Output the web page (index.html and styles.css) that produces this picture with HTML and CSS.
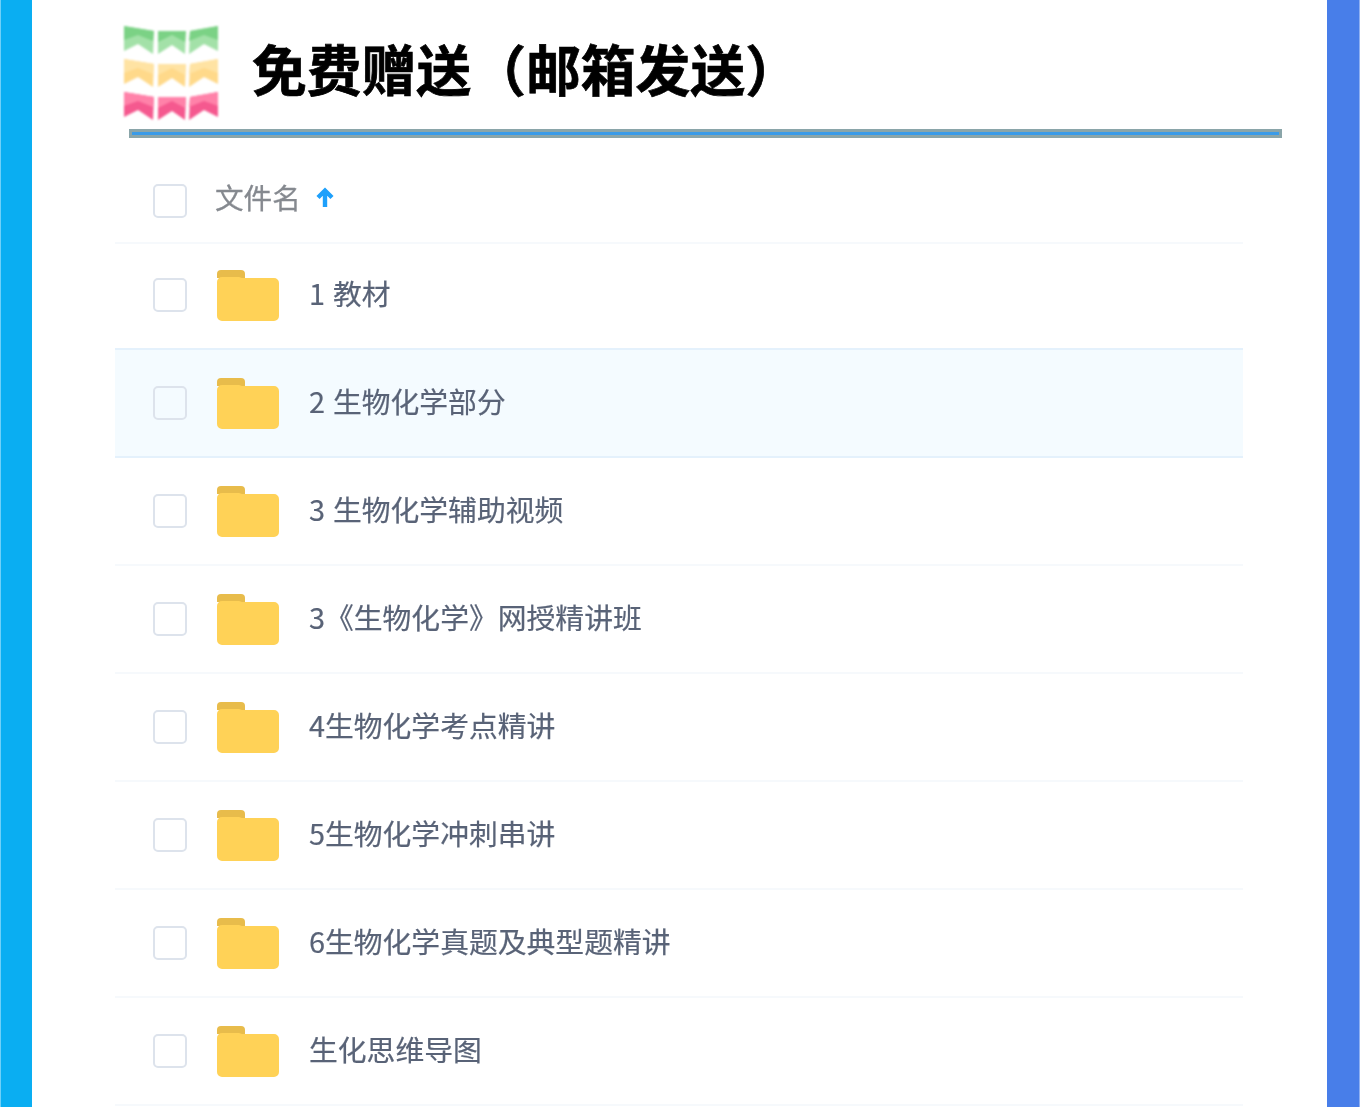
FILE: index.html
```html
<!DOCTYPE html>
<html lang="zh-CN">
<head>
<meta charset="utf-8">
<title>免费赠送（邮箱发送）</title>
<link rel="stylesheet" href="styles.css">
</head>
<body>
<div class="page">
  <div class="bar bar-left"></div>
  <main class="main">
    <header class="head">
      <svg class="bunting" viewBox="0 0 94 94" aria-hidden="true">
        <defs>
          <g id="flags-a">
            <polygon points="0,0 30,5 29,28 14,18 0,25"/>
            <polygon points="34,5 62,5 61,28 48,19 34,28"/>
            <polygon points="66,5 94,0 94,25 80,18 65,28"/>
          </g>
          <g id="flags-b">
            <polygon points="0,0 30,5 29,15 14,9 0,14"/>
            <polygon points="34,5 62,5 61,16 48,9 34,16"/>
            <polygon points="66,5 94,0 94,14 80,9 65,15"/>
          </g>
        </defs>
        <g class="row-green"><use href="#flags-a" class="lo"/><use href="#flags-b" class="hi"/></g>
        <g class="row-yellow" transform="translate(0 33)"><use href="#flags-a" class="lo"/><use href="#flags-b" class="hi"/></g>
        <g class="row-pink" transform="translate(0 66)"><use href="#flags-a" class="lo"/><use href="#flags-b" class="hi"/></g>
      </svg>
      <h1 class="title">免费赠送（邮箱发送）</h1>
    </header>
    <div class="rule"></div>
    <section class="list">
      <div class="list-head">
        <span class="check"></span>
        <span class="col-name">文件名</span>
        <svg class="sort" viewBox="0 0 18 21" aria-hidden="true"><path d="M9 20V4M2 10.5l7-7 7 7" fill="none" stroke="currentColor" stroke-width="4.4"/></svg>
      </div>
      <div class="row"><span class="check"></span><svg class="folder" viewBox="0 0 62 51"><use href="#folder"/></svg><span class="name">1 教材</span></div>
      <div class="row is-hover"><span class="check"></span><svg class="folder" viewBox="0 0 62 51"><use href="#folder"/></svg><span class="name">2 生物化学部分</span></div>
      <div class="row"><span class="check"></span><svg class="folder" viewBox="0 0 62 51"><use href="#folder"/></svg><span class="name">3 生物化学辅助视频</span></div>
      <div class="row"><span class="check"></span><svg class="folder" viewBox="0 0 62 51"><use href="#folder"/></svg><span class="name">3《生物化学》网授精讲班</span></div>
      <div class="row"><span class="check"></span><svg class="folder" viewBox="0 0 62 51"><use href="#folder"/></svg><span class="name">4生物化学考点精讲</span></div>
      <div class="row"><span class="check"></span><svg class="folder" viewBox="0 0 62 51"><use href="#folder"/></svg><span class="name">5生物化学冲刺串讲</span></div>
      <div class="row"><span class="check"></span><svg class="folder" viewBox="0 0 62 51"><use href="#folder"/></svg><span class="name">6生物化学真题及典型题精讲</span></div>
      <div class="row"><span class="check"></span><svg class="folder" viewBox="0 0 62 51"><use href="#folder"/></svg><span class="name">生化思维导图</span></div>
    </section>
  </main>
  <div class="bar bar-right"></div>
</div>
<svg class="defs" aria-hidden="true">
  <defs>
    <g id="folder">
      <path d="M0 4a4 4 0 0 1 4-4h20a4 4 0 0 1 4 4v4H0z" fill="#e8bc4b"/>
      <path d="M0 12a5 5 0 0 1 5-5h17l3 1h32a5 5 0 0 1 5 5v33a5 5 0 0 1-5 5H5a5 5 0 0 1-5-5z" fill="#ffd257"/>
    </g>
  </defs>
</svg>
</body>
</html>
```
FILE: styles.css
```css
* { box-sizing: border-box; }
html, body { margin: 0; height: 100%; overflow: hidden; background: #fff; }
body { font-family: "Noto Sans CJK SC", "Noto Sans", sans-serif; }

.page { display: flex; height: 1107px; width: 1360px; }

.bar { flex: none; width: 33px; height: 100%; }
.bar-left { width: 32px; background: #0aaef2; border-left: 1px solid #6fd0f8; }
.bar-right { background: #487ee9; border-right: 1px solid #8fb0f2; }

.main { flex: 1; min-width: 0; }

.head { display: flex; align-items: center; height: 129px; padding: 26px 0 9px 92px; }
.bunting { width: 94px; height: 94px; flex: none; filter: blur(0.8px); }
.title { margin: 0 0 0 34px; font-size: 54.8px; font-weight: 700; color: #000; line-height: 1; position: relative; top: -6px; white-space: nowrap; -webkit-text-stroke: 0.7px #000; filter: blur(0.4px); }

.row-green .hi { fill: #7bd285; } .row-green .lo { fill: #a3e1a8; }
.row-yellow .hi { fill: #ffe3a3; } .row-yellow .lo { fill: #ffd98a; }
.row-pink .hi { fill: #ff82a9; } .row-pink .lo { fill: #f5598f; }

.rule { width: 1153px; height: 9px; margin-left: 97px; background: #3a9be8; border: 3px solid #8aa5a9; }

.list { width: 1128px; margin-left: 83px; }
.list-head { display: flex; align-items: center; height: 104px; padding: 22px 0 0 38px; position: relative; z-index: 1; box-shadow: 0 2px 0 #f6f9fc; }
.col-name { margin-left: 28px; font-size: 28.6px; color: #85898f; line-height: 1; position: relative; top: -4px; -webkit-text-stroke: 0.3px #85898f; filter: blur(0.5px); }
.sort { width: 18px; height: 21px; margin-left: 15px; color: #1ea0fb; position: relative; top: -4px; filter: blur(0.3px); }

.row { display: flex; align-items: center; height: 108px; padding-left: 38px; border-bottom: 2px solid #f6f9fc; }
.row.is-hover { background: #f4fbff; border-bottom-color: #e4f1fc; box-shadow: 0 -2px 0 #e4f1fc; }

.check { flex: none; width: 34px; height: 34px; border: 2px solid #dde3ec; border-radius: 5px; background: #fff; filter: blur(0.5px); }
.is-hover .check { background: transparent; }
.folder { flex: none; width: 62px; height: 51px; margin-left: 30px; filter: blur(0.5px); }
.name { margin-left: 30px; font-size: 28.8px; word-spacing: 1.5px; color: #596377; line-height: 1; position: relative; top: -2px; white-space: nowrap; -webkit-text-stroke: 0.2px #596377; filter: blur(0.5px); }

.defs { position: absolute; width: 0; height: 0; }
```
